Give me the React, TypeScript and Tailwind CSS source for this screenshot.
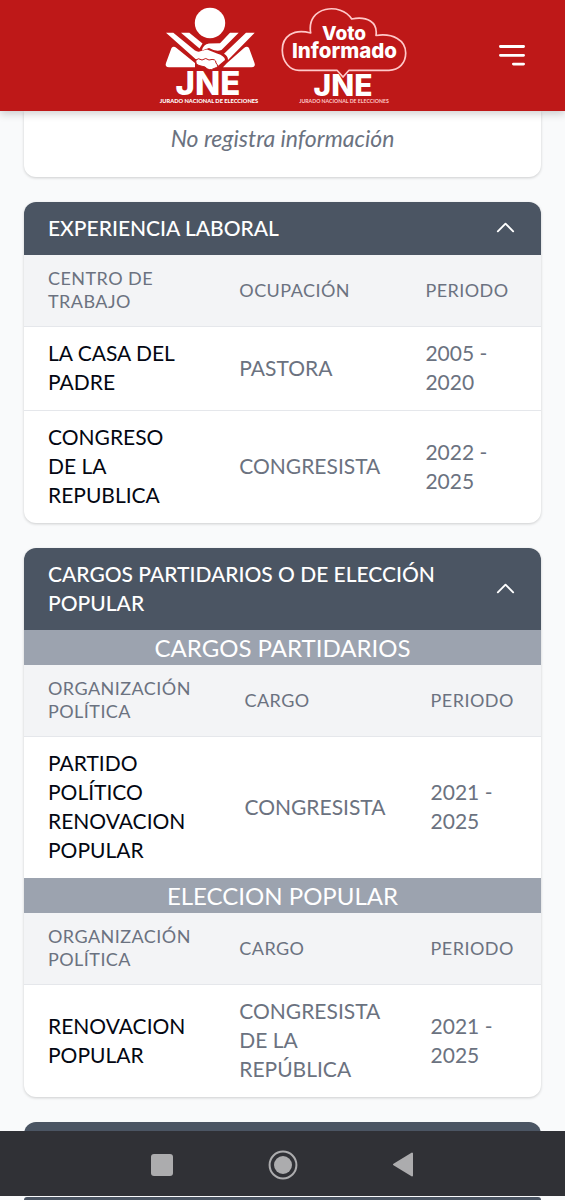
import type { ReactNode } from "react";

type TableProps = { heads: string[]; rows: string[][]; widths: string[] };

function RecordTable({ heads, rows, widths }: TableProps) {
  return (
    <table className="w-full table-fixed text-left">
      <thead className="bg-[#f3f4f6] text-[18px] leading-[23px] tracking-wide text-[#6b7280]">
        <tr className="border-b border-[#e5e7eb]">
          {heads.map((head, i) => (
            <th key={head} scope="col" className={`${widths[i]} px-6 pt-3 pb-[13px] font-normal`}>
              {head}
            </th>
          ))}
        </tr>
      </thead>
      <tbody className="divide-y divide-[#e5e7eb] text-[21px] leading-[29px] text-[#6b7280]">
        {rows.map((row) => (
          <tr key={row.join()}>
            {row.map((cell, i) => (
              <td key={i} className={`px-6 pt-[11px] pb-[14px] ${i === 0 ? "text-[#030712]" : ""}`}>
                {cell}
              </td>
            ))}
          </tr>
        ))}
      </tbody>
    </table>
  );
}

function Section({ title, children }: { title: string; children?: ReactNode }) {
  return (
    <section className="overflow-hidden rounded-xl bg-white shadow-[0_1px_3px_rgba(0,0,0,0.18)]">
      <h2>
        <button
          type="button"
          aria-expanded={Boolean(children)}
          className="flex w-full items-center justify-between bg-[#4b5563] px-6 pt-[11px] pb-[13px] text-left text-[21px] leading-[29px] font-medium text-white"
        >
          <span>{title}</span>
          <svg viewBox="0 0 24 24" className="ml-4 size-[23px] shrink-0" fill="none" stroke="currentColor" strokeWidth="2" strokeLinecap="round" strokeLinejoin="round">
            <path d="M4 16l8-8 8 8" />
          </svg>
        </button>
      </h2>
      {children}
    </section>
  );
}

function Band({ children }: { children: ReactNode }) {
  return <h3 className="bg-[#9ca3af] text-center text-2xl leading-[35px] text-white">{children}</h3>;
}

function JneLogo() {
  return (
    <svg viewBox="0 0 100 98" className="h-[98px] w-[100px]" fill="#fff" role="img" aria-label="JNE">
      <circle cx="51" cy="16" r="15.2" />
      <path d="M12.500 41 Q14.500 38.500 17.500 41 L36 56 V60.300 H10 Q5.500 60 7 56 Z" />
      <path d="M90 41 Q88 38.500 85 41 L68 56 L64 60.300 H92.500 Q97 60 95.500 56 Z" />
      <path d="M7 25.700 H14.300 L36 43.500 Q39 45.500 42 44 L48 42.500 L58 46.500 Q66 49 66 53 L57 60.500 L50 54 L36.500 52 Z" />
      <path d="M22 25.700 H30.300 L43.500 36.500 L40.500 41.500 Z" />
      <path d="M71 25.700 H79.700 L62.500 43 Q57 45 50 41 L43 43.500 Q44 37.500 50 36.600 L61 36.300 Z" />
      <path d="M87 25.700 H95.700 L69 53 Q69 49 65 46.800 Z" />
      <path d="M37 53 Q39 50.500 43 53 Q47 50 50 53 Q57 51 57 56 Q61 60 55 61.500 Q50 64.500 46 60 L40 58.500 Q36 57 37 53 Z" stroke="#be1818" strokeWidth="1" />
      <text x="49" y="88" textAnchor="middle" fontFamily="Inter" fontWeight="800" fontSize="33">JNE</text>
      <text x="50" y="96" textAnchor="middle" fontFamily="Lato" fontWeight="900" fontSize="5.7">JURADO NACIONAL DE ELECCIONES</text>
    </svg>
  );
}

function VotoLogo() {
  return (
    <svg viewBox="0 0 126 98" className="h-[98px] w-[126px]" fill="#fff" role="img" aria-label="Voto Informado JNE">
      <text x="62" y="89" textAnchor="middle" fontFamily="Inter" fontWeight="800" fontSize="30">JNE</text>
      <path
        d="M29.700 26 C12 21 1 30 1.300 43.500 C1.500 55 9 63.300 18 63.300 H56 L62 70 L68 63.300 H108 C118 63.300 124.700 56 124.700 46 C124.700 33 112 26 95 28.500 C97 15 86 9 70.700 12 C60 -5 25 -1 29.700 26 Z"
        fill="#be1818"
        stroke="#ffc9c9"
        strokeWidth="1.700"
        strokeLinejoin="round"
      />
      <text x="63" y="33" textAnchor="middle" fontFamily="Inter" fontWeight="800" fontSize="19">Voto</text>
      <text x="63.500" y="51" textAnchor="middle" fontFamily="Inter" fontWeight="800" fontSize="20.5">Informado</text>
      <text x="63" y="96" textAnchor="middle" fontFamily="Lato" fontWeight="700" fontSize="5.2" fill="#ffc9c9">JURADO NACIONAL DE ELECCIONES</text>
    </svg>
  );
}

export default function App() {
  return (
    <div className="min-h-screen bg-[#f9fafb] font-[Lato,sans-serif]">
      <header className="relative grid grid-cols-[1fr_auto_1fr] items-center bg-[#be1818] pt-[7px] pb-[6px] shadow-[0_3px_8px_rgba(0,0,0,0.18)]">
        <a href="#inicio" className="col-start-2 flex gap-[22px]">
          <JneLogo />
          <VotoLogo />
        </a>
        <button type="button" aria-label="Menú" className="mr-10 justify-self-end text-white">
          <svg viewBox="0 0 26 22" className="h-[22px] w-[26px]" fill="none" stroke="currentColor" strokeWidth="2.8" strokeLinecap="round">
            <path d="M1.400 1.500H24.600M1.400 10.300H24.600M14.400 19.100H24.600" />
          </svg>
        </button>
      </header>

      <main className="flex flex-col gap-[25px] px-6">
        <section className="rounded-b-xl bg-white pt-3 pb-6 text-center text-[23px] leading-[30px] text-[#6b7280] italic shadow-[0_1px_3px_rgba(0,0,0,0.18)]">
          No registra información
        </section>

        <Section title="EXPERIENCIA LABORAL">
          <RecordTable
            widths={["w-[37%]", "w-[36%]", "w-[27%]"]}
            heads={["CENTRO DE TRABAJO", "OCUPACIÓN", "PERIODO"]}
            rows={[
              ["LA CASA DEL PADRE", "PASTORA", "2005 - 2020"],
              ["CONGRESO DE LA REPUBLICA", "CONGRESISTA", "2022 - 2025"],
            ]}
          />
        </Section>

        <Section title="CARGOS PARTIDARIOS O DE ELECCIÓN POPULAR">
          <Band>CARGOS PARTIDARIOS</Band>
          <RecordTable
            widths={["w-[38%]", "w-[36%]", "w-[26%]"]}
            heads={["ORGANIZACIÓN POLÍTICA", "CARGO", "PERIODO"]}
            rows={[["PARTIDO POLÍTICO RENOVACION POPULAR", "CONGRESISTA", "2021 - 2025"]]}
          />
          <Band>ELECCION POPULAR</Band>
          <RecordTable
            widths={["w-[37%]", "w-[37%]", "w-[26%]"]}
            heads={["ORGANIZACIÓN POLÍTICA", "CARGO", "PERIODO"]}
            rows={[["RENOVACION POPULAR", "CONGRESISTA DE LA REPÚBLICA", "2021 - 2025"]]}
          />
        </Section>

        <div className="h-[50px] rounded-xl bg-[#4b5563]" />
        <div className="h-[3px] rounded-t-xl bg-[#4b5563]" />
      </main>

      <nav aria-label="Sistema" className="fixed inset-x-0 bottom-1 flex h-[65px] items-center justify-center gap-[95px] bg-[#303136] pt-[2px] pr-[2px] text-[#acacae]">
        <button type="button" aria-label="Recientes">
          <svg viewBox="0 0 22 22" className="size-[22px]" fill="currentColor"><rect width="22" height="22" rx="3" /></svg>
        </button>
        <button type="button" aria-label="Inicio">
          <svg viewBox="0 0 30 30" className="size-[30px]" fill="currentColor">
            <circle cx="15" cy="15" r="13.4" fill="none" stroke="currentColor" strokeWidth="2" />
            <circle cx="15" cy="15" r="9" />
          </svg>
        </button>
        <button type="button" aria-label="Atrás">
          <svg viewBox="0 0 20 25" className="h-[25px] w-[20px]" fill="currentColor" stroke="currentColor" strokeWidth="2" strokeLinejoin="round"><path d="M19 1.500V23.500L1 12.500Z" /></svg>
        </button>
      </nav>
    </div>
  );
}
